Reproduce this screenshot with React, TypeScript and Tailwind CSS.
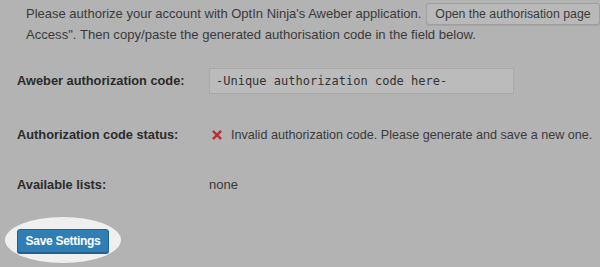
export default function App() {
    return (
        <div className="relative w-[600px] h-[267px] overflow-hidden bg-[#b3b3b3] text-[#3a3a3a] font-['Liberation_Sans',Arial,sans-serif] text-[13px]">
            <div className="pl-[26px] pt-[3px] leading-[20px]">
                <p className="flex items-center whitespace-nowrap">
                    Please authorize your account with OptIn Ninja's Aweber application.
                    <button className="ml-[5px] h-[22px] rounded-[3px] border border-[#9f9f9f] bg-[#b9b9b9] px-[8px] text-[12.3px] text-[#3a3a3a] shadow-[0_1px_0_#a5a5a5]">
                        Open the authorisation page
                    </button>
                    <span className="ml-[1px]">,</span>
                </p>
                <p className="whitespace-nowrap text-[13.1px]">Access". Then copy/paste the generated authorisation code in the field below.</p>
            </div>

            <div className="mt-[23px] pl-[17px]">
                <div className="flex items-center h-[26px]">
                    <label className="w-[192px] shrink-0 font-bold text-[#2b2b2b] text-[12.8px]">Aweber authorization code:</label>
                    <div className="h-[26px] w-[305px] border border-[#a8a8a8] bg-[#bbbbbb] pl-[6px] flex items-center font-['DejaVu_Sans_Mono',monospace] text-[12px] text-[#333]">
                        -Unique authorization code here-
                    </div>
                </div>

                <div className="flex items-center h-[26px] mt-[28px]">
                    <span className="w-[192px] shrink-0 font-bold text-[#2b2b2b] text-[12.8px]">Authorization code status:</span>
                    <span className="flex items-center gap-[9px] whitespace-nowrap text-[12.6px]">
                        <svg width="10" height="10" viewBox="0 0 10 10" className="ml-[3px]">
                            <path d="M1.8 1.8 L8.2 8.2 M8.2 1.8 L1.8 8.2" stroke="#b8322f" strokeWidth="2.4" strokeLinecap="square" />
                        </svg>
                        Invalid authorization code. Please generate and save a new one.
                    </span>
                </div>

                <div className="flex items-center h-[26px] mt-[24px]">
                    <span className="w-[192px] shrink-0 font-bold text-[#2b2b2b] text-[12.8px]">Available lists:</span>
                    <span>none</span>
                </div>
            </div>

            <div className="absolute left-[5px] top-[217px] w-[116px] h-[46px] rounded-[50%] bg-[#efefef]" />
            <button className="absolute left-[17px] top-[229px] h-[24px] w-[92px] rounded-[3px] border border-[#24628e] bg-[#2f7fb6] text-[12px] tracking-[-0.3px] font-bold text-white shadow-[0_1px_0_#245f88]">
                Save Settings
            </button>
        </div>
    );
}
